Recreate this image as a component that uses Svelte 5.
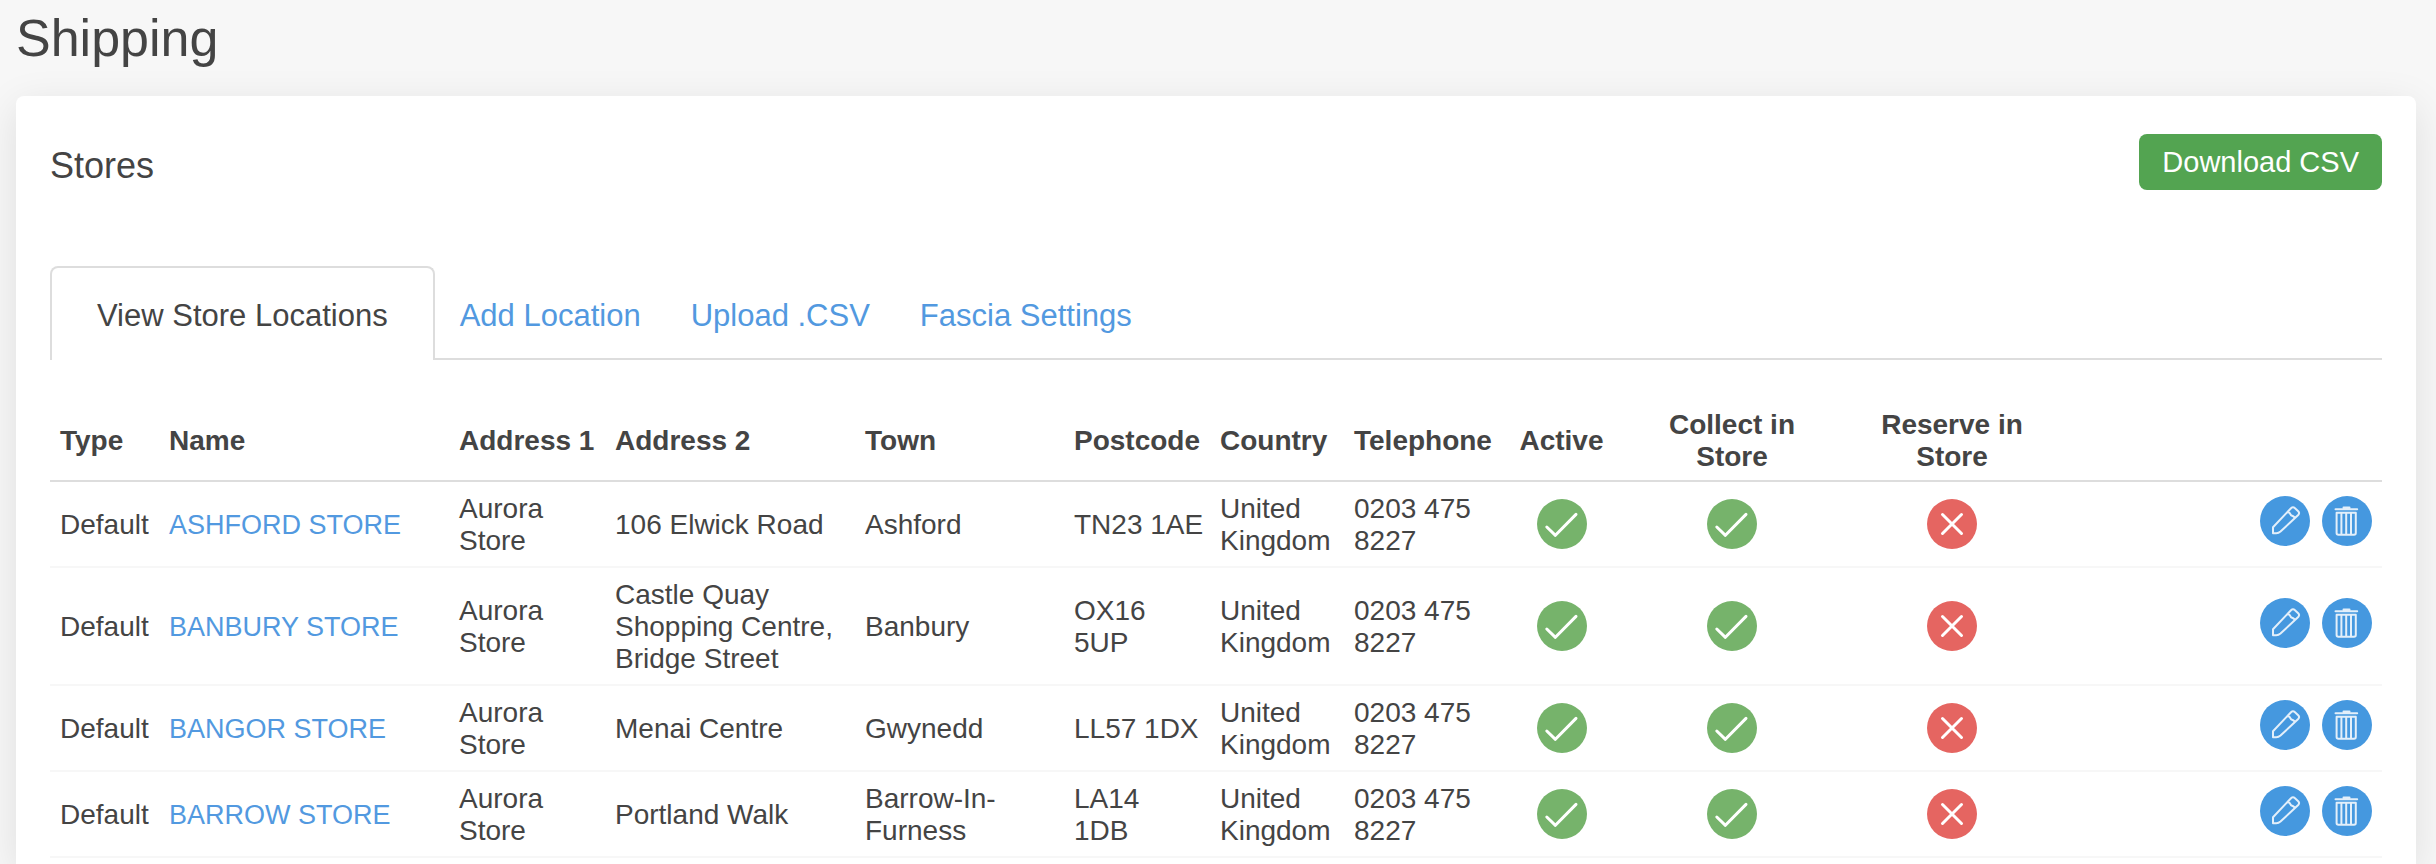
<script>
	const tabs = ['View Store Locations', 'Add Location', 'Upload .CSV', 'Fascia Settings'];
	let activeTab = tabs[0];

	const columns = [
		{ key: 'type', label: 'Type' },
		{ key: 'name', label: 'Name' },
		{ key: 'address1', label: 'Address 1' },
		{ key: 'address2', label: 'Address 2' },
		{ key: 'town', label: 'Town' },
		{ key: 'postcode', label: 'Postcode' },
		{ key: 'country', label: 'Country' },
		{ key: 'telephone', label: 'Telephone' },
		{ key: 'active', label: 'Active', flag: true },
		{ key: 'collect', label: 'Collect in Store', flag: true },
		{ key: 'reserve', label: 'Reserve in Store', flag: true }
	];

	// Values shared by every store
	const defaults = {
		type: 'Default',
		address1: 'Aurora\nStore',
		country: 'United\nKingdom',
		telephone: '0203 475\n8227',
		active: true,
		collect: true,
		reserve: false
	};

	let stores = [
		{ name: 'ASHFORD STORE', address2: '106 Elwick Road', town: 'Ashford', postcode: 'TN23 1AE' },
		{ name: 'BANBURY STORE', address2: 'Castle Quay\nShopping Centre,\nBridge Street', town: 'Banbury', postcode: 'OX16\n5UP' },
		{ name: 'BANGOR STORE', address2: 'Menai Centre', town: 'Gwynedd', postcode: 'LL57 1DX' },
		{ name: 'BARROW STORE', address2: 'Portland Walk', town: 'Barrow-In-\nFurness', postcode: 'LA14\n1DB' }
	].map((store) => ({ ...defaults, ...store }));

	// Remove a store from the list
	function remove(store) {
		stores = stores.filter((s) => s !== store);
	}
</script>

<div class="page">
	<h1>Shipping</h1>

	<main class="card">
		<header>
			<h2>Stores</h2>
			<button class="download">Download CSV</button>
		</header>

		<nav class="tabs">
			{#each tabs as tab}
				<a href="#tab" class:selected={tab === activeTab} on:click|preventDefault={() => (activeTab = tab)}>{tab}</a>
			{/each}
		</nav>

		<table>
			<colgroup>
				{#each columns as column}
					<col class="col-{column.key}" />
				{/each}
				<col />
			</colgroup>
			<thead>
				<tr>
					{#each columns as column}
						<th class:flag={column.flag}>{column.label}</th>
					{/each}
					<th></th>
				</tr>
			</thead>
			<tbody>
				{#each stores as store}
					<tr>
						{#each columns as column}
							{#if column.flag}
								<td class="flag">
									{#if store[column.key]}
										<svg class="icon yes" viewBox="0 0 50 50" role="img" aria-label="Yes">
											<circle cx="25" cy="25" r="25" />
											<path d="M9.8 28 18.4 36.3 39 15.4" />
										</svg>
									{:else}
										<svg class="icon no" viewBox="0 0 50 50" role="img" aria-label="No">
											<circle cx="25" cy="25" r="25" />
											<path d="M15.5 15.5 34.5 34.5M34.5 15.5 15.5 34.5" />
										</svg>
									{/if}
								</td>
							{:else if column.key === 'name'}
								<td class="text"><a class="name" href="#store">{store.name}</a></td>
							{:else}
								<td class="text">{store[column.key]}</td>
							{/if}
						{/each}
						<td>
							<div class="actions">
								<button aria-label="Edit">
									<svg class="icon action" viewBox="0 0 50 50">
										<circle cx="25" cy="25" r="25" />
										<path d="M13 37.2V31.2L31 12.2Q33 10.4 35 12.2L38.2 15.2Q40 17 38.2 19L20.5 35.6Q18.5 37.3 16 37.2ZM27.5 15.8Q30 16.5 31 19.2Q33.8 20 35 22" />
									</svg>
								</button>
								<button aria-label="Delete" on:click={() => remove(store)}>
									<svg class="icon action" viewBox="0 0 50 50">
										<circle cx="25" cy="25" r="25" />
										<path d="M13.5 13.2H35.2M21.5 11.6H27.5M14.6 16.8H33.8V37Q33.8 38.8 32 38.8H16.4Q14.6 38.8 14.6 37ZM19.4 17V38.5M24.2 17V38.5M29 17V38.5" />
									</svg>
								</button>
							</div>
						</td>
					</tr>
				{/each}
			</tbody>
		</table>
	</main>
</div>

<style>
	:global(body) {
		background: #f7f7f7;
		color: #444;
		font-family: "Helvetica Neue", "Liberation Sans", Arial, sans-serif;
	}

	.page {
		box-sizing: border-box;
		display: flex;
		flex-direction: column;
		min-height: 100vh;
		padding: 8px 20px 0 16px;
		overflow: hidden;
	}

	h1,
	h2 {
		margin: 0;
		font-weight: 300;
	}

	h1 {
		margin-bottom: 28px;
		font-size: 52px;
		line-height: 60px;
	}

	h2 {
		font-size: 36px;
		line-height: 48px;
	}

	.card {
		flex: 1;
		padding: 38px 34px 0;
		background: white;
		border-radius: 8px 8px 0 0;
		box-shadow: 0 10px 40px rgba(0, 0, 0, 0.1);
	}

	header {
		display: flex;
		align-items: flex-end;
		justify-content: space-between;
		margin-bottom: 76px;
	}

	button {
		border: none;
		padding: 0;
		background: none;
		font-family: inherit;
		cursor: pointer;
	}

	.download {
		padding: 10px 23px;
		border-radius: 8px;
		background: #53a451;
		color: white;
		font-size: 29px;
		line-height: 36px;
	}

	a {
		color: #5299e0;
		text-decoration: none;
	}

	.tabs {
		display: flex;
		margin-bottom: 38px;
		border-bottom: 2px solid #ddd;
	}

	.tabs a {
		margin-bottom: -2px;
		padding: 30px 23px 26px;
		border: 2px solid transparent;
		border-bottom: none;
		font-size: 31px;
		line-height: 36px;
	}

	.tabs a.selected {
		padding-left: 45px;
		padding-right: 45px;
		border-color: #ddd;
		border-radius: 8px 8px 0 0;
		background: white;
		color: #444;
	}

	table {
		width: 100%;
		table-layout: fixed;
		border-spacing: 0;
		font-size: 28px;
		line-height: 32px;
	}

	.col-type { width: 109px; }
	.col-name { width: 290px; }
	.col-address1 { width: 156px; }
	.col-address2 { width: 250px; }
	.col-town { width: 209px; }
	.col-postcode { width: 146px; }
	.col-country { width: 134px; }
	.col-telephone { width: 157px; }
	.col-active { width: 121px; }
	.col-collect { width: 220px; }
	.col-reserve { width: 220px; }

	th,
	td {
		padding: 10px;
		border-bottom: 2px solid #f7f7f7;
		text-align: left;
		vertical-align: middle;
	}

	th {
		padding: 11px 10px 7px;
		border-color: #ddd;
	}

	th:not(.flag) {
		white-space: nowrap;
	}

	.text {
		padding: 11px 10px 9px;
		white-space: pre;
	}

	.flag {
		text-align: center;
	}

	.name {
		font-size: 27px;
	}

	.icon {
		display: block;
		width: 50px;
		height: 50px;
		margin: 0 auto;
		fill: none;
		stroke: white;
		stroke-width: 3;
		stroke-linecap: round;
		stroke-linejoin: round;
	}

	.icon circle {
		stroke: none;
	}

	.yes circle {
		fill: #76b36b;
	}

	.no circle {
		fill: #e56561;
	}

	.action {
		stroke: #e3effa;
		stroke-width: 2;
	}

	.action circle {
		fill: #4598df;
	}

	.actions {
		display: flex;
		justify-content: flex-end;
		gap: 12px;
		padding-bottom: 6px;
	}
</style>
